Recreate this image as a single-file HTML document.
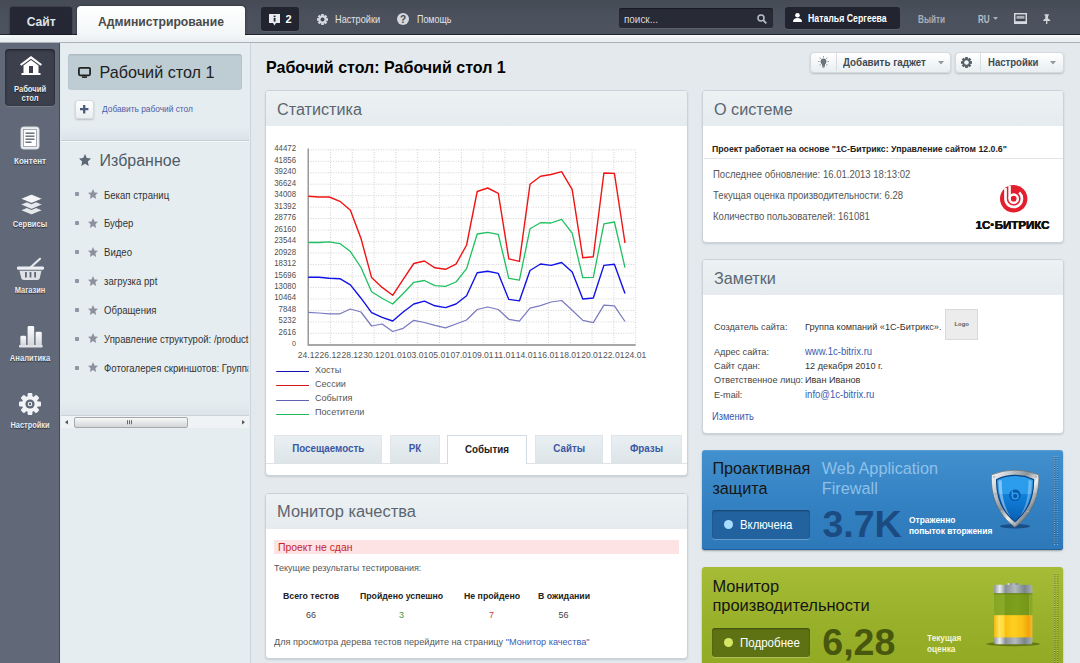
<!DOCTYPE html>
<html lang="ru"><head><meta charset="utf-8"><title>Рабочий стол</title>
<style>
*{box-sizing:border-box;margin:0;padding:0}
html,body{width:1080px;height:663px;overflow:hidden}
body{position:relative;font-family:"Liberation Sans",sans-serif;font-size:12px;color:#333;background:#e2e9ed}
.abs,.t{position:absolute}
.t{white-space:nowrap;transform-origin:0 50%}
svg{position:absolute;overflow:visible}
#top{left:0;top:0;width:1080px;height:34px;background:linear-gradient(#454b55,#4b515c 40%,#4d535e)}
#strip{left:0;top:34px;width:1080px;height:9px;background:linear-gradient(#fdfefe,#eef2f4 40%,#e8edf0);border-top:1px solid #1f2330;border-bottom:1px solid #aab2b8}
#tab1{left:10px;top:7px;width:62px;height:27px;background:#252834;border-radius:3px 3px 0 0;box-shadow:0 0 2px rgba(0,0,0,.6)}
#tab2{left:77px;top:6px;width:168px;height:29px;background:linear-gradient(#ffffff,#f3f6f7);border-radius:4px 4px 0 0;box-shadow:0 0 3px rgba(0,0,0,.5)}#tab2b{left:77px;top:34px;width:168px;height:8px;background:linear-gradient(#f4f6f8,#e9eef1)}
.dk{background:#22252f;border-radius:3px;box-shadow:0 1px 0 rgba(255,255,255,.08)}
#lbar{left:0;top:43px;width:60px;height:620px;background:#616979;border-right:1px solid #434b5c}
#lact{left:5px;top:49px;width:50px;height:57px;background:#3b404c;border-radius:4px;box-shadow:inset 0 1px 3px rgba(0,0,0,.55),0 1px 0 rgba(255,255,255,.12)}
.ll{text-shadow:0 1px 1px rgba(0,0,0,.55)}
#sub{left:61px;top:43px;width:190px;height:620px;background:#e6edf0;border-right:1px solid #cbd5dd}
#main{left:251px;top:43px;width:829px;height:620px;background:#e3e9ed}
.panel{background:#fff;border:1px solid #cbd3d9;border-radius:4px;box-shadow:0 1px 2px rgba(0,0,0,.13);overflow:hidden}
.ph{left:0;top:0;width:100%;height:35px;background:linear-gradient(#edf1f4,#e5ebee);position:absolute}
.btn{background:linear-gradient(#ffffff,#e9eef1);border:1px solid #d3d9de;border-radius:4px;box-shadow:0 1px 2px rgba(0,0,0,.2)}
.tab{background:linear-gradient(#e9eff2,#dde5e9);border:1px solid #dfe5e9;border-bottom:none}
</style></head><body>
<div id="main" class="abs"></div>
<div id="top" class="abs"></div><div id="strip" class="abs"></div><div id="tab1" class="abs"></div><div id="tab2" class="abs"></div><div id="tab2b" class="abs"></div>
<div class="t " style="left:26.7px;top:14.5px;font-size:12.15px;line-height:15px;color:#dfe3ea;font-weight:bold;">Сайт</div>
<div class="t " style="left:98px;top:14.7px;font-size:12.17px;line-height:15px;color:#4a4a4a;font-weight:bold;">Администрирование</div>
<div class="abs dk" style="left:260.500px;top:7px;width:38.500px;height:24px"></div>
<svg style="left:269px;top:13.5px" width="11" height="12" viewBox="0 0 11 12"><path d="M0 0h11v9h-4l-1.5 2.5L4 9H0z" fill="#e8ebf0"/><rect x="4.7" y="1.6" width="1.8" height="1.6" fill="#22252f"/><rect x="4.7" y="4" width="1.8" height="3.6" fill="#22252f"/></svg>
<div class="t " style="left:285.5px;top:12.0px;font-size:11px;line-height:14px;color:#fff;font-weight:bold;">2</div>
<svg style="left:317px;top:13.5px" width="11" height="11" viewBox="-5.5 -5.5 11 11"><g fill="#d4d8df"><rect x="-1.3" y="-5.5" width="2.6" height="11" transform="rotate(0)"/><rect x="-1.3" y="-5.5" width="2.6" height="11" transform="rotate(45)"/><rect x="-1.3" y="-5.5" width="2.6" height="11" transform="rotate(90)"/><rect x="-1.3" y="-5.5" width="2.6" height="11" transform="rotate(135)"/><circle r="4.1"/></g><circle r="2" fill="#444852"/></svg>
<div class="t " style="left:335px;top:12.0px;font-size:11px;line-height:14px;color:#e0e3e9;font-weight:normal;transform:scaleX(0.835);">Настройки</div>
<svg style="left:397px;top:13px" width="12" height="12" viewBox="0 0 12 12"><circle cx="6" cy="6" r="6" fill="#d4d8df"/></svg>
<div class="t " style="left:400.3px;top:12.3px;font-size:10.8px;line-height:14px;color:#444852;font-weight:bold;transform:scaleX(0.926);">?</div>
<div class="t " style="left:416.5px;top:12.0px;font-size:11px;line-height:14px;color:#e0e3e9;font-weight:normal;transform:scaleX(0.81);">Помощь</div>
<div class="abs" style="left:619px;top:8px;width:154px;height:20px;background:#282b36;border-radius:2px;box-shadow:inset 0 1px 1px rgba(0,0,0,.4),0 1px 0 rgba(255,255,255,.08)"></div>
<div class="t " style="left:623.7px;top:12.0px;font-size:11px;line-height:14px;color:#d4d8df;font-weight:normal;transform:scaleX(0.9);">поиск...</div>
<svg style="left:757px;top:13.5px" width="10" height="10" viewBox="0 0 10 10"><circle cx="4" cy="4" r="3" fill="none" stroke="#b8bdc6" stroke-width="1.5"/><path d="M6.2 6.2L9.3 9.3" stroke="#b8bdc6" stroke-width="1.8"/></svg>
<div class="abs dk" style="left:785px;top:7px;width:115px;height:22px"></div>
<svg style="left:793px;top:13px" width="9" height="9" viewBox="0 0 9 9"><circle cx="4.5" cy="2.3" r="2.3" fill="#fff"/><path d="M0 9c0-3 2-4 4.5-4S9 6 9 9z" fill="#fff"/></svg>
<div class="t " style="left:808px;top:12.0px;font-size:10.5px;line-height:13px;color:#fff;font-weight:bold;transform:scaleX(0.832);">Наталья Сергеева</div>
<div class="t " style="left:917.5px;top:12.5px;font-size:10.5px;line-height:13px;color:#a9aeb9;font-weight:bold;transform:scaleX(0.78);">Выйти</div>
<div class="t " style="left:977.5px;top:12.5px;font-size:10.5px;line-height:13px;color:#b7bcc6;font-weight:bold;transform:scaleX(0.77);">RU</div>
<svg style="left:993px;top:17px" width="5" height="3" viewBox="0 0 5 3"><path d="M0 0h5L2.5 3z" fill="#a9aeb9"/></svg>
<svg style="left:1014px;top:13px" width="13" height="11" viewBox="0 0 13 11"><rect x=".75" y=".75" width="11.5" height="9.5" fill="#3c414b" stroke="#d6dae0" stroke-width="1.500"/><rect x=".75" y="8.200" width="11.500" height="2" fill="#d6dae0"/><rect x="2.500" y="2.800" width="8" height="3" fill="#a9aeb8"/></svg>
<svg style="left:1043.200px;top:13.200px" width="7.400" height="12.200" viewBox="0 0 9 12"><path d="M1.800 0h5.400v1.600h-1v3.600l2.500 2v1.200H5.300v3.600h-1.600V8.400H.3V7.200l2.500-2V1.600h-1z" fill="#d0d4db"/></svg>
<div id="lbar" class="abs"></div><div id="lact" class="abs"></div>
<div class="t ll" style="left:0;width:60px;text-align:center;top:83.7px;font-size:9px;line-height:11px;color:#eceef1;font-weight:bold;transform-origin:50% 50%;transform:scaleX(0.845)">Рабочий</div>
<div class="t ll" style="left:0;width:60px;text-align:center;top:93.3px;font-size:9px;line-height:11px;color:#eceef1;font-weight:bold;transform-origin:50% 50%;transform:scaleX(0.845)">стол</div>
<div class="t ll" style="left:0;width:60px;text-align:center;top:155.8px;font-size:9px;line-height:11px;color:#eceef1;font-weight:bold;transform-origin:50% 50%;transform:scaleX(0.9)">Контент</div>
<div class="t ll" style="left:0;width:60px;text-align:center;top:219.2px;font-size:9px;line-height:11px;color:#eceef1;font-weight:bold;transform-origin:50% 50%;transform:scaleX(0.84)">Сервисы</div>
<div class="t ll" style="left:0;width:60px;text-align:center;top:284.9px;font-size:9px;line-height:11px;color:#eceef1;font-weight:bold;transform-origin:50% 50%;transform:scaleX(0.825)">Магазин</div>
<div class="t ll" style="left:0;width:60px;text-align:center;top:352.9px;font-size:9px;line-height:11px;color:#eceef1;font-weight:bold;transform-origin:50% 50%;transform:scaleX(0.845)">Аналитика</div>
<div class="t ll" style="left:0;width:60px;text-align:center;top:419.5px;font-size:9px;line-height:11px;color:#eceef1;font-weight:bold;transform-origin:50% 50%;transform:scaleX(0.825)">Настройки</div>
<svg style="left:19.5px;top:56px" width="22" height="19" viewBox="0 0 22 19"><path d="M11 0L0 8.2l1.3 1.6L11 2.8l9.7 7 1.3-1.6z" fill="#fff"/><path d="M3.5 9.5L11 4l7.5 5.5V17H3.5z" fill="#fff"/><rect x="9" y="10" width="4" height="7" fill="#3b404c"/><rect x="1.5" y="17" width="19" height="2" fill="#fff"/></svg>
<svg style="left:20px;top:126px" width="20" height="24" viewBox="0 0 20 24"><rect x="1" y="1" width="18" height="22" rx="2.5" fill="#eceef1" stroke="#d9dce1" stroke-width="1"/><rect x="3.5" y="3.5" width="13" height="17" fill="#fff" stroke="#8e95a1" stroke-width=".8"/><g fill="#5f6877"><rect x="5.5" y="6.5" width="9" height="1.4"/><rect x="5.5" y="9.5" width="9" height="1.4"/><rect x="5.5" y="12.5" width="9" height="1.4"/><rect x="5.5" y="15.5" width="6" height="1.4"/></g></svg>
<svg style="left:20px;top:194px" width="23" height="22" viewBox="0 0 23 22"><g fill="#e6e8eb" stroke="#5f6877" stroke-width="1.100"><path d="M11.500 11.500L0 16.300l11.500 4.800L23 16.300z"/><path d="M11.500 5.800L0 10.600l11.500 4.800L23 10.600z"/><path d="M11.500 0L0 4.800l11.500 4.800L23 4.800z" fill="#f4f5f7"/></g></svg>
<svg style="left:17px;top:258px" width="27" height="22" viewBox="0 0 27 22"><path d="M14 9L23 .8" stroke="#e6e8eb" stroke-width="2.2" stroke-linecap="round" fill="none"/><rect x="0" y="8.5" width="27" height="3.2" rx="1.3" fill="#eceef1"/><path d="M2.5 12.700h22l-1.800 7.500q-.5 1.800-2.300 1.800H6.600q-1.800 0-2.300-1.800z" fill="#dfe1e5"/><g fill="#5f6877"><rect x="8" y="14" width="1.8" height="5.5"/><rect x="12.6" y="14" width="1.8" height="5.5"/><rect x="17.2" y="14" width="1.8" height="5.5"/></g></svg>
<svg style="left:18.600px;top:326px" width="23.600" height="21.500" viewBox="0 0 23.600 21.500"><defs><linearGradient id="ag" x1="0" y1="0" x2="0" y2="1"><stop offset="0" stop-color="#fafbfc"/><stop offset="1" stop-color="#d3d6db"/></linearGradient></defs><g fill="url(#ag)"><path d="M1.400 19.500V11.200q0-1.400 1.400-1.400h2.900q1.400 0 1.400 1.400V19.500z"/><path d="M8.600 19.500V1.400Q8.600 0 10 0h3.800q1.400 0 1.400 1.400V19.500z"/><path d="M16.600 19.500V7.100q0-1.400 1.400-1.400h3.400q1.400 0 1.400 1.400V19.500z"/><rect x="0" y="19" width="23.600" height="2.400" rx=".6" fill="#dfe1e5"/></g></svg>
<svg style="left:19px;top:393px" width="22" height="22" viewBox="-11 -11 22 22"><g fill="#f2f3f5"><rect x="-2.4" y="-11" width="4.8" height="22" rx="1" transform="rotate(0)"/><rect x="-2.4" y="-11" width="4.8" height="22" rx="1" transform="rotate(45)"/><rect x="-2.4" y="-11" width="4.8" height="22" rx="1" transform="rotate(90)"/><rect x="-2.4" y="-11" width="4.8" height="22" rx="1" transform="rotate(135)"/><circle r="8"/></g><circle r="4.6" fill="#5f6877"/><circle r="2.3" fill="#f2f3f5"/><circle r="1.2" fill="#5f6877"/></svg>
<div id="sub" class="abs"></div>
<div class="abs" style="left:68px;top:53.700px;width:174px;height:36.800px;background:#bdcdd3;border-radius:3px;box-shadow:inset 0 1px 2px rgba(0,0,0,.12)"></div>
<svg style="left:78px;top:67px" width="13" height="11" viewBox="0 0 13 11"><rect x=".9" y=".9" width="11.2" height="7.4" rx="1.2" fill="none" stroke="#222" stroke-width="1.8"/><rect x="4" y="9.3" width="5" height="1.6" fill="#222"/></svg>
<div class="t " style="left:99.6px;top:61.8px;font-size:16.17px;line-height:20px;color:#222;font-weight:normal;">Рабочий стол 1</div>
<div class="abs btn" style="left:75px;top:99.5px;width:19px;height:19.5px;border-radius:3px"></div>
<svg style="left:80.300px;top:105px" width="8.400" height="8.400" viewBox="0 0 8 8"><path d="M2.900 0h2.200v2.900h2.900v2.200H5.100v2.900H2.900V5.100H0V2.900h2.900z" fill="#4d5c7c"/></svg>
<div class="t " style="left:101.7px;top:104.1px;font-size:8.7px;line-height:11px;color:#4a60a6;font-weight:normal;transform:scaleX(0.96);">Добавить рабочий стол</div>
<div class="abs" style="left:61px;top:126px;width:188px;height:14px;background:linear-gradient(rgba(200,212,219,0),rgba(200,212,219,.38))"></div>
<div class="abs" style="left:61px;top:139.5px;width:188px;height:1px;background:#c6cfd5"></div><div class="abs" style="left:61px;top:140.5px;width:188px;height:1px;background:#f5f8f9"></div>
<svg style="left:79px;top:153.8px" width="12" height="12" viewBox="0 0 10 10"><path d="M5 0l1.5 3.4 3.5.4-2.6 2.5.7 3.7L5 8.1 1.9 10l.7-3.7L0 3.8l3.5-.4z" fill="#5d6977"/></svg>
<div class="t " style="left:99.6px;top:150.9px;font-size:15.98px;line-height:20px;color:#4f5b67;font-weight:normal;">Избранное</div>
<div class="abs" style="left:74.5px;top:192.2px;width:4px;height:4px;background:#9097a4;border-radius:.8px"></div>
<svg style="left:87.5px;top:188.8px" width="10" height="10" viewBox="0 0 10 10"><path d="M5 0l1.5 3.4 3.5.4-2.6 2.5.7 3.7L5 8.1 1.9 10l.7-3.7L0 3.8l3.5-.4z" fill="#8c919d"/></svg>
<div class="t " style="left:104px;top:188.5px;font-size:10.35px;line-height:13px;color:#333;font-weight:normal;transform:scaleX(0.926);">Бекап страниц</div>
<div class="abs" style="left:74.5px;top:221.1px;width:4px;height:4px;background:#9097a4;border-radius:.8px"></div>
<svg style="left:87.5px;top:217.7px" width="10" height="10" viewBox="0 0 10 10"><path d="M5 0l1.5 3.4 3.5.4-2.6 2.5.7 3.7L5 8.1 1.9 10l.7-3.7L0 3.8l3.5-.4z" fill="#8c919d"/></svg>
<div class="t " style="left:104px;top:217.4px;font-size:10.35px;line-height:13px;color:#333;font-weight:normal;transform:scaleX(0.926);">Буфер</div>
<div class="abs" style="left:74.5px;top:250.0px;width:4px;height:4px;background:#9097a4;border-radius:.8px"></div>
<svg style="left:87.5px;top:246.6px" width="10" height="10" viewBox="0 0 10 10"><path d="M5 0l1.5 3.4 3.5.4-2.6 2.5.7 3.7L5 8.1 1.9 10l.7-3.7L0 3.8l3.5-.4z" fill="#8c919d"/></svg>
<div class="t " style="left:104px;top:246.3px;font-size:10.35px;line-height:13px;color:#333;font-weight:normal;transform:scaleX(0.926);">Видео</div>
<div class="abs" style="left:74.5px;top:279.0px;width:4px;height:4px;background:#9097a4;border-radius:.8px"></div>
<svg style="left:87.5px;top:275.6px" width="10" height="10" viewBox="0 0 10 10"><path d="M5 0l1.5 3.4 3.5.4-2.6 2.5.7 3.7L5 8.1 1.9 10l.7-3.7L0 3.8l3.5-.4z" fill="#8c919d"/></svg>
<div class="t " style="left:104px;top:275.3px;font-size:10.35px;line-height:13px;color:#333;font-weight:normal;transform:scaleX(0.926);">загрузка ppt</div>
<div class="abs" style="left:74.5px;top:307.9px;width:4px;height:4px;background:#9097a4;border-radius:.8px"></div>
<svg style="left:87.5px;top:304.5px" width="10" height="10" viewBox="0 0 10 10"><path d="M5 0l1.5 3.4 3.5.4-2.6 2.5.7 3.7L5 8.1 1.9 10l.7-3.7L0 3.8l3.5-.4z" fill="#8c919d"/></svg>
<div class="t " style="left:104px;top:304.2px;font-size:10.35px;line-height:13px;color:#333;font-weight:normal;transform:scaleX(0.926);">Обращения</div>
<div class="abs" style="left:74.5px;top:336.8px;width:4px;height:4px;background:#9097a4;border-radius:.8px"></div>
<svg style="left:87.5px;top:333.4px" width="10" height="10" viewBox="0 0 10 10"><path d="M5 0l1.5 3.4 3.5.4-2.6 2.5.7 3.7L5 8.1 1.9 10l.7-3.7L0 3.8l3.5-.4z" fill="#8c919d"/></svg>
<div class="t" style="left:104px;top:333.1px;width:156px;overflow:hidden;font-size:10.35px;line-height:13px;color:#333;transform:scaleX(.926)">Управление структурой: /products</div>
<div class="abs" style="left:74.5px;top:365.7px;width:4px;height:4px;background:#9097a4;border-radius:.8px"></div>
<svg style="left:87.5px;top:362.3px" width="10" height="10" viewBox="0 0 10 10"><path d="M5 0l1.5 3.4 3.5.4-2.6 2.5.7 3.7L5 8.1 1.9 10l.7-3.7L0 3.8l3.5-.4z" fill="#8c919d"/></svg>
<div class="t" style="left:104px;top:362.0px;width:156px;overflow:hidden;font-size:10.35px;line-height:13px;color:#333;transform:scaleX(.926)">Фотогалерея скриншотов: Группа</div>
<div class="abs" style="left:61px;top:402px;width:188px;height:13px;background:linear-gradient(rgba(200,212,219,0),rgba(200,212,219,.38))"></div>
<div class="abs" style="left:61px;top:415px;width:188px;height:1px;background:#cbd3d9"></div>
<div class="abs" style="left:61px;top:416px;width:188px;height:12px;background:#eff3f5"></div>
<div class="abs" style="left:73.500px;top:416.800px;width:114.300px;height:11.100px;background:linear-gradient(#f8f8f8,#d3d5d7);border:1px solid #a4a9ae;border-radius:2px"></div>
<svg style="left:127px;top:420px" width="6" height="4.5" viewBox="0 0 6 4"><path d="M.5 0v4M2.5 0v4M4.5 0v4" stroke="#666" stroke-width="1"/></svg>
<svg style="left:64.500px;top:420px" width="3" height="4.600" viewBox="0 0 3 5"><path d="M3 0v5L0 2.500z" fill="#4a4a4a"/></svg>
<svg style="left:241.800px;top:420px" width="3" height="4.600" viewBox="0 0 3 5"><path d="M0 0v5l3-2.500z" fill="#4a4a4a"/></svg>
<div class="t " style="left:266px;top:57.0px;font-size:16.05px;line-height:20px;color:#000;font-weight:bold;">Рабочий стол: Рабочий стол 1</div>
<div class="abs btn" style="left:810px;top:51.5px;width:141px;height:21.5px"></div>
<div class="abs" style="left:835.5px;top:53px;width:1px;height:18px;background:#d6dce0"></div>
<svg style="left:818px;top:56px" width="11" height="12" viewBox="-5.5 -5.5 11 12"><g stroke="#9aa2aa" stroke-width="1"><path d="M0 -5.5V-3.9" transform="rotate(0)"/><path d="M0 -5.5V-3.9" transform="rotate(45)"/><path d="M0 -5.5V-3.9" transform="rotate(90)"/><path d="M0 -5.5V-3.9" transform="rotate(-45)"/><path d="M0 -5.5V-3.9" transform="rotate(-90)"/><path d="M0 -5.5V-3.9" transform="rotate(135)"/><path d="M0 -5.5V-3.9" transform="rotate(-135)"/></g><circle r="2.9" fill="#6c757d"/><rect x="-1.5" y="2.5" width="3" height="2.6" fill="#6c757d"/><rect x="-.9" y="5.3" width="1.8" height=".9" fill="#6c757d"/></svg>
<div class="t " style="left:843.3px;top:55.7px;font-size:10.59px;line-height:13px;color:#3f4a53;font-weight:bold;transform:scaleX(0.926);">Добавить гаджет</div>
<svg style="left:937.5px;top:60.5px" width="6" height="3.5" viewBox="0 0 6 3.5"><path d="M0 0h6L3 3.5z" fill="#8f989f"/></svg>
<div class="abs btn" style="left:955px;top:51.5px;width:109px;height:21.5px"></div>
<div class="abs" style="left:979.5px;top:53px;width:1px;height:18px;background:#d6dce0"></div>
<svg style="left:961.2px;top:56.5px" width="11" height="11" viewBox="-5.5 -5.5 11 11"><g fill="#555e66"><rect x="-1.3" y="-5.5" width="2.6" height="11" transform="rotate(0)"/><rect x="-1.3" y="-5.5" width="2.6" height="11" transform="rotate(45)"/><rect x="-1.3" y="-5.5" width="2.6" height="11" transform="rotate(90)"/><rect x="-1.3" y="-5.5" width="2.6" height="11" transform="rotate(135)"/><circle r="4.2"/></g><circle r="2.3" fill="#f3f6f7"/></svg>
<div class="t " style="left:988px;top:55.7px;font-size:10.34px;line-height:13px;color:#3f4a53;font-weight:bold;transform:scaleX(0.926);">Настройки</div>
<svg style="left:1049.7px;top:60.5px" width="6" height="3.5" viewBox="0 0 6 3.5"><path d="M0 0h6L3 3.5z" fill="#8f989f"/></svg>
<div class="abs panel" style="left:265px;top:90px;width:423px;height:386px"><div class="ph"></div></div>
<div class="t " style="left:277px;top:98.6px;font-size:16.18px;line-height:20px;color:#5b6670;font-weight:normal;">Статистика</div>
<div class="abs panel" style="left:265px;top:493px;width:423px;height:166px"><div class="ph"></div></div>
<div class="t " style="left:277px;top:501.1px;font-size:16.44px;line-height:21px;color:#5b6670;font-weight:normal;">Монитор качества</div>
<div class="abs panel" style="left:702px;top:90px;width:362px;height:153px"><div class="ph"></div></div>
<div class="t " style="left:714px;top:98.6px;font-size:16.2px;line-height:20px;color:#5b6670;font-weight:normal;">О системе</div>
<div class="abs panel" style="left:702px;top:259px;width:362px;height:175px"><div class="ph"></div></div>
<div class="t " style="left:714px;top:267.6px;font-size:16.2px;line-height:20px;color:#5b6670;font-weight:normal;">Заметки</div>
<svg style="left:0;top:0" width="1080" height="663" viewBox="0 0 1080 663"><path d="M330.5 149.5V344.8M352.3 149.5V344.8M374.1 149.5V344.8M395.9 149.5V344.8M417.7 149.5V344.8M439.5 149.5V344.8M461.3 149.5V344.8M483.1 149.5V344.8M504.9 149.5V344.8M526.7 149.5V344.8M548.5 149.5V344.8M570.3 149.5V344.8M592.1 149.5V344.8M613.9 149.5V344.8M635.7 149.5V344.8M308.2 333.3H635.2M308.2 321.9H635.2M308.2 310.4H635.2M308.2 298.9H635.2M308.2 287.4H635.2M308.2 276.0H635.2M308.2 264.5H635.2M308.2 253.0H635.2M308.2 241.6H635.2M308.2 230.1H635.2M308.2 218.6H635.2M308.2 207.2H635.2M308.2 195.7H635.2M308.2 184.2H635.2M308.2 172.8H635.2M308.2 161.3H635.2M308.2 149.8H635.2" stroke="#d2d2d2" stroke-width="1" stroke-dasharray="1 1.5" fill="none"/><path d="M308.2 148.5V345.0H635.7" stroke="#8a8a8a" stroke-width="1.3" fill="none"/><polyline points="308.2,312.3 318.8,313 329.3,313.8 339.9,313.8 350.4,309 361.0,312 371.6,326 382.1,324 392.7,331.5 403.2,328.3 413.8,320.3 424.4,322.5 434.9,325.4 445.5,327.9 456.0,324 466.6,320 477.2,309.5 487.7,307 498.3,309.5 508.8,319.3 519.4,321.1 530.0,308.1 540.5,305.6 551.1,302 561.6,300.5 572.2,310.3 582.8,320.4 593.3,322.6 603.9,305.2 614.4,305.9 625.0,321.5" fill="none" stroke="#7a7ac0" stroke-width="1.25" stroke-linejoin="round"/><polyline points="308.2,277.3 318.8,277.3 329.3,278.3 339.9,278.7 350.4,284.9 361.0,298.2 371.6,312.7 382.1,317.4 392.7,321 403.2,312 413.8,304 424.4,301.1 434.9,305.8 445.5,307.6 456.0,304 466.6,295.7 477.2,272.7 487.7,271.2 498.3,273.4 508.8,299.4 519.4,300.9 530.0,270.5 540.5,264 551.1,265.4 561.6,262.5 572.2,271.9 582.8,299 593.3,298 603.9,265.4 614.4,264.3 625.0,293.6" fill="none" stroke="#1212e6" stroke-width="1.4" stroke-linejoin="round"/><polyline points="308.2,242.5 318.8,242.5 329.3,241.8 339.9,243.6 350.4,251.6 361.0,267.5 371.6,291.7 382.1,298.2 392.7,304 403.2,293.5 413.8,282.3 424.4,280.5 434.9,285.6 445.5,286.3 456.0,282 466.6,268.6 477.2,234 487.7,232.4 498.3,234.3 508.8,278.4 519.4,280.2 530.0,228.8 540.5,222.7 551.1,223 561.6,219.4 572.2,233.2 582.8,277.7 593.3,277.3 603.9,223.8 614.4,222 625.0,267.6" fill="none" stroke="#1fc060" stroke-width="1.3" stroke-linejoin="round"/><polyline points="308.2,196.2 318.8,197 329.3,197 339.9,201.3 350.4,210.3 361.0,238.5 371.6,277.6 382.1,287.4 392.7,295.3 403.2,279.4 413.8,263.5 424.4,261 434.9,267.8 445.5,269.3 456.0,264.2 466.6,245 477.2,191.5 487.7,188 498.3,193.3 508.8,258.9 519.4,261.4 530.0,184.3 540.5,176.3 551.1,174.5 561.6,171.6 572.2,189.7 582.8,257.8 593.3,256.7 603.9,173 614.4,173.4 625.0,243" fill="none" stroke="#f01414" stroke-width="1.4" stroke-linejoin="round"/><text x="296" y="345.9" font-size="7.2" fill="#505050" text-anchor="end" font-family="Liberation Sans, sans-serif">0</text><text x="278.6" y="334.8" font-size="9" fill="#505050" textLength="17.4" lengthAdjust="spacingAndGlyphs" font-family="Liberation Sans, sans-serif">2616</text><text x="278.6" y="323.4" font-size="9" fill="#505050" textLength="17.4" lengthAdjust="spacingAndGlyphs" font-family="Liberation Sans, sans-serif">5232</text><text x="278.6" y="311.9" font-size="9" fill="#505050" textLength="17.4" lengthAdjust="spacingAndGlyphs" font-family="Liberation Sans, sans-serif">7848</text><text x="274.2" y="300.4" font-size="9" fill="#505050" textLength="21.8" lengthAdjust="spacingAndGlyphs" font-family="Liberation Sans, sans-serif">10464</text><text x="274.2" y="288.9" font-size="9" fill="#505050" textLength="21.8" lengthAdjust="spacingAndGlyphs" font-family="Liberation Sans, sans-serif">13080</text><text x="274.2" y="277.5" font-size="9" fill="#505050" textLength="21.8" lengthAdjust="spacingAndGlyphs" font-family="Liberation Sans, sans-serif">15696</text><text x="274.2" y="266.0" font-size="9" fill="#505050" textLength="21.8" lengthAdjust="spacingAndGlyphs" font-family="Liberation Sans, sans-serif">18312</text><text x="274.2" y="254.5" font-size="9" fill="#505050" textLength="21.8" lengthAdjust="spacingAndGlyphs" font-family="Liberation Sans, sans-serif">20928</text><text x="274.2" y="243.1" font-size="9" fill="#505050" textLength="21.8" lengthAdjust="spacingAndGlyphs" font-family="Liberation Sans, sans-serif">23544</text><text x="274.2" y="231.6" font-size="9" fill="#505050" textLength="21.8" lengthAdjust="spacingAndGlyphs" font-family="Liberation Sans, sans-serif">26160</text><text x="274.2" y="220.1" font-size="9" fill="#505050" textLength="21.8" lengthAdjust="spacingAndGlyphs" font-family="Liberation Sans, sans-serif">28776</text><text x="274.2" y="208.7" font-size="9" fill="#505050" textLength="21.8" lengthAdjust="spacingAndGlyphs" font-family="Liberation Sans, sans-serif">31392</text><text x="274.2" y="197.2" font-size="9" fill="#505050" textLength="21.8" lengthAdjust="spacingAndGlyphs" font-family="Liberation Sans, sans-serif">34008</text><text x="274.2" y="185.7" font-size="9" fill="#505050" textLength="21.8" lengthAdjust="spacingAndGlyphs" font-family="Liberation Sans, sans-serif">36624</text><text x="274.2" y="174.2" font-size="9" fill="#505050" textLength="21.8" lengthAdjust="spacingAndGlyphs" font-family="Liberation Sans, sans-serif">39240</text><text x="274.2" y="162.8" font-size="9" fill="#505050" textLength="21.8" lengthAdjust="spacingAndGlyphs" font-family="Liberation Sans, sans-serif">41856</text><text x="274.2" y="151.3" font-size="9" fill="#505050" textLength="21.8" lengthAdjust="spacingAndGlyphs" font-family="Liberation Sans, sans-serif">44472</text><text x="297.8" y="357.7" font-size="9" fill="#555" textLength="21.4" lengthAdjust="spacingAndGlyphs" font-family="Liberation Sans, sans-serif">24.12</text><text x="319.6" y="357.7" font-size="9" fill="#555" textLength="21.4" lengthAdjust="spacingAndGlyphs" font-family="Liberation Sans, sans-serif">26.12</text><text x="341.4" y="357.7" font-size="9" fill="#555" textLength="21.4" lengthAdjust="spacingAndGlyphs" font-family="Liberation Sans, sans-serif">28.12</text><text x="363.2" y="357.7" font-size="9" fill="#555" textLength="21.4" lengthAdjust="spacingAndGlyphs" font-family="Liberation Sans, sans-serif">30.12</text><text x="385.0" y="357.7" font-size="9" fill="#555" textLength="21.4" lengthAdjust="spacingAndGlyphs" font-family="Liberation Sans, sans-serif">01.01</text><text x="406.8" y="357.7" font-size="9" fill="#555" textLength="21.4" lengthAdjust="spacingAndGlyphs" font-family="Liberation Sans, sans-serif">03.01</text><text x="428.6" y="357.7" font-size="9" fill="#555" textLength="21.4" lengthAdjust="spacingAndGlyphs" font-family="Liberation Sans, sans-serif">05.01</text><text x="450.4" y="357.7" font-size="9" fill="#555" textLength="21.4" lengthAdjust="spacingAndGlyphs" font-family="Liberation Sans, sans-serif">07.01</text><text x="472.2" y="357.7" font-size="9" fill="#555" textLength="21.4" lengthAdjust="spacingAndGlyphs" font-family="Liberation Sans, sans-serif">09.01</text><text x="494.0" y="357.7" font-size="9" fill="#555" textLength="21.4" lengthAdjust="spacingAndGlyphs" font-family="Liberation Sans, sans-serif">11.01</text><text x="515.8" y="357.7" font-size="9" fill="#555" textLength="21.4" lengthAdjust="spacingAndGlyphs" font-family="Liberation Sans, sans-serif">14.01</text><text x="537.6" y="357.7" font-size="9" fill="#555" textLength="21.4" lengthAdjust="spacingAndGlyphs" font-family="Liberation Sans, sans-serif">16.01</text><text x="559.4" y="357.7" font-size="9" fill="#555" textLength="21.4" lengthAdjust="spacingAndGlyphs" font-family="Liberation Sans, sans-serif">18.01</text><text x="581.2" y="357.7" font-size="9" fill="#555" textLength="21.4" lengthAdjust="spacingAndGlyphs" font-family="Liberation Sans, sans-serif">20.01</text><text x="603.0" y="357.7" font-size="9" fill="#555" textLength="21.4" lengthAdjust="spacingAndGlyphs" font-family="Liberation Sans, sans-serif">22.01</text><text x="624.8" y="357.7" font-size="9" fill="#555" textLength="21.4" lengthAdjust="spacingAndGlyphs" font-family="Liberation Sans, sans-serif">24.01</text><path d="M276.2 371.5H309" stroke="#1414b4" stroke-width="1.1"/><path d="M276.2 385.5H309" stroke="#d81414" stroke-width="1.1"/><path d="M276.2 400.5H309" stroke="#6060b0" stroke-width="1.1"/><path d="M276.2 414.5H309" stroke="#1cb858" stroke-width="1.1"/></svg>
<div class="t " style="left:314.6px;top:364.0px;font-size:9.82px;line-height:12px;color:#555;font-weight:normal;transform:scaleX(0.926);">Хосты</div>
<div class="t " style="left:314.6px;top:378.0px;font-size:9.82px;line-height:12px;color:#555;font-weight:normal;transform:scaleX(0.926);">Сессии</div>
<div class="t " style="left:314.6px;top:392.0px;font-size:9.82px;line-height:12px;color:#555;font-weight:normal;transform:scaleX(0.926);">События</div>
<div class="t " style="left:314.6px;top:406.0px;font-size:9.82px;line-height:12px;color:#555;font-weight:normal;transform:scaleX(0.926);">Посетители</div>
<div class="abs" style="left:266px;top:463px;width:421px;height:1px;background:#dde3e7"></div>
<div class="abs tab" style="left:273.5px;top:434.5px;width:108.5px;height:28.5px"></div>
<div class="t" style="left:273.5px;width:108.5px;text-align:center;top:441.5px;font-size:10.4px;line-height:13px;font-weight:bold;color:#3b57a3;transform-origin:50% 50%;transform:scaleX(.94)">Посещаемость</div>
<div class="abs tab" style="left:389.5px;top:434.5px;width:50px;height:28.5px"></div>
<div class="t" style="left:389.5px;width:50px;text-align:center;top:441.5px;font-size:10.4px;line-height:13px;font-weight:bold;color:#3b57a3;transform-origin:50% 50%;transform:scaleX(.94)">РК</div>
<div class="abs" style="left:447px;top:434.5px;width:80px;height:29.5px;background:#fff;border:1px solid #d3dbe0;border-bottom:none"></div>
<div class="t" style="left:447px;width:80px;text-align:center;top:442.5px;font-size:10.4px;line-height:13px;font-weight:bold;color:#222;transform-origin:50% 50%;transform:scaleX(.94)">События</div>
<div class="abs tab" style="left:534.5px;top:434.5px;width:68.5px;height:28.5px"></div>
<div class="t" style="left:534.5px;width:68.5px;text-align:center;top:441.5px;font-size:10.4px;line-height:13px;font-weight:bold;color:#3b57a3;transform-origin:50% 50%;transform:scaleX(.94)">Сайты</div>
<div class="abs tab" style="left:610.5px;top:434.5px;width:71px;height:28.5px"></div>
<div class="t" style="left:610.5px;width:71px;text-align:center;top:441.5px;font-size:10.4px;line-height:13px;font-weight:bold;color:#3b57a3;transform-origin:50% 50%;transform:scaleX(.94)">Фразы</div>
<div class="abs" style="left:274.3px;top:540.3px;width:404.5px;height:13.7px;background:#fde3e3"></div>
<div class="t " style="left:278.3px;top:540.3px;font-size:11.26px;line-height:14px;color:#c8232c;font-weight:normal;transform:scaleX(0.926);">Проект не сдан</div>
<div class="t " style="left:274.3px;top:562.3px;font-size:9.71px;line-height:12px;color:#555;font-weight:normal;transform:scaleX(0.926);">Текущие результаты тестирования:</div>
<div class="t " style="left:283.2px;top:589.6px;font-size:9.46px;line-height:12px;color:#222;font-weight:bold;transform:scaleX(0.926);">Всего тестов</div>
<div class="t " style="left:359.8px;top:589.6px;font-size:9.43px;line-height:12px;color:#222;font-weight:bold;transform:scaleX(0.926);">Пройдено успешно</div>
<div class="t " style="left:463.7px;top:589.6px;font-size:9.46px;line-height:12px;color:#222;font-weight:bold;transform:scaleX(0.926);">Не пройдено</div>
<div class="t " style="left:537.9px;top:589.6px;font-size:9.46px;line-height:12px;color:#222;font-weight:bold;transform:scaleX(0.926);">В ожидании</div>
<div class="t" style="left:281px;width:60px;text-align:center;top:608.6px;font-size:9px;line-height:13px;color:#444">66</div>
<div class="t" style="left:371.4px;width:60px;text-align:center;top:608.6px;font-size:9px;line-height:13px;color:#4a9a3a">3</div>
<div class="t" style="left:461.4px;width:60px;text-align:center;top:608.6px;font-size:9px;line-height:13px;color:#d03a3a">7</div>
<div class="t" style="left:533.5px;width:60px;text-align:center;top:608.6px;font-size:9px;line-height:13px;color:#444">56</div>
<div class="t " style="left:274.3px;top:636.4px;font-size:9.9px;line-height:12px;color:#555;font-weight:normal;transform:scaleX(0.926);">Для просмотра дерева тестов перейдите на страницу <span style="color:#3a5bb0">"Монитор качества"</span></div>
<div class="t " style="left:711.7px;top:142.5px;font-size:9.44px;line-height:12px;color:#222;font-weight:bold;transform:scaleX(0.926);">Проект работает на основе "1С-Битрикс: Управление сайтом 12.0.6"</div>
<div class="abs" style="left:704px;top:158px;width:359px;height:1px;background:#dfe5e8"></div>
<div class="t " style="left:712.8px;top:168.1px;font-size:10.3px;line-height:13px;color:#555;font-weight:normal;transform:scaleX(0.926);">Последнее обновление: 16.01.2013 18:13:02</div>
<div class="t " style="left:712.8px;top:189.1px;font-size:10.35px;line-height:13px;color:#555;font-weight:normal;transform:scaleX(0.926);">Текущая оценка производительности: 6.28</div>
<div class="t " style="left:712.8px;top:209.6px;font-size:10.31px;line-height:13px;color:#555;font-weight:normal;transform:scaleX(0.926);">Количество пользователей: 161081</div>
<svg style="left:999.7px;top:184.8px" width="27.4" height="27.4" viewBox="-13.7 -13.7 27.4 27.4"><circle r="13.7" fill="#e31e2d"/><path d="M-8.200 -10.8V0A8.200 8.200 0 1 0 5.500 -6.100" fill="none" stroke="#fff" stroke-width="2.700"/><path d="M-4.100 -12.900V0" stroke="#fff" stroke-width="2.500" fill="none"/><circle r="4.100" fill="none" stroke="#fff" stroke-width="2.500"/></svg>
<div class="t " style="left:975.6px;top:217.8px;font-size:11.5px;line-height:14px;color:#111;font-weight:bold;text-shadow:.3px 0 0 #111,-.3px 0 0 #111;">1С<span style="font-size:17px;line-height:0;position:relative;top:1.5px;margin:0 -.6px">·</span>БИТРИКС</div>
<div class="t " style="left:713.5px;top:320.6px;font-size:9.83px;line-height:12px;color:#444;font-weight:normal;transform:scaleX(0.926);">Создатель сайта:</div>
<div class="t " style="left:804.5px;top:320.6px;font-size:9.88px;line-height:12px;color:#333;font-weight:normal;transform:scaleX(0.926);">Группа компаний «1С-Битрикс».</div>
<div class="t " style="left:713.5px;top:345.8px;font-size:9.83px;line-height:12px;color:#444;font-weight:normal;transform:scaleX(0.926);">Адрес сайта:</div>
<div class="t " style="left:804.5px;top:345.3px;font-size:10.28px;line-height:13px;color:#3a5bb0;font-weight:normal;transform:scaleX(0.926);">www.1c-bitrix.ru</div>
<div class="t " style="left:713.5px;top:360.3px;font-size:9.83px;line-height:12px;color:#444;font-weight:normal;transform:scaleX(0.926);">Сайт сдан:</div>
<div class="t " style="left:804.5px;top:360.3px;font-size:9.88px;line-height:12px;color:#333;font-weight:normal;transform:scaleX(0.926);">12 декабря 2010 г.</div>
<div class="t " style="left:713.5px;top:374.4px;font-size:9.83px;line-height:12px;color:#444;font-weight:normal;transform:scaleX(0.926);">Ответственное лицо:</div>
<div class="t " style="left:804.5px;top:374.4px;font-size:9.88px;line-height:12px;color:#333;font-weight:normal;transform:scaleX(0.926);">Иван Иванов</div>
<div class="t " style="left:713.5px;top:388.8px;font-size:9.83px;line-height:12px;color:#444;font-weight:normal;transform:scaleX(0.926);">E-mail:</div>
<div class="t " style="left:804.5px;top:388.3px;font-size:10.28px;line-height:13px;color:#3a5bb0;font-weight:normal;transform:scaleX(0.926);">info@1c-bitrix.ru</div>
<div class="abs" style="left:945px;top:309px;width:32.5px;height:30.5px;background:#ececec;border:1px solid #dadada"></div>
<div class="t " style="left:954.5px;top:321.0px;font-size:5.9px;line-height:7px;color:#5a5a5a;font-weight:bold;">Logo</div>
<div class="t " style="left:711.7px;top:409.6px;font-size:10.03px;line-height:13px;color:#3a5bb0;font-weight:normal;transform:scaleX(0.926);">Изменить</div>
<div class="abs" style="left:702px;top:450px;width:361px;height:100px;background:linear-gradient(#4290cd,#3381c2 55%,#2d78b9);border-radius:3px;box-shadow:0 1px 2px rgba(0,0,0,.3), inset 0 -1px 0 #1f5f9c, inset 0 1px 0 rgba(255,255,255,.13)"></div>
<div class="t " style="left:712.4px;top:458.2px;font-size:16.23px;line-height:20px;color:#151515;font-weight:normal;">Проактивная</div>
<div class="t " style="left:712.4px;top:477.7px;font-size:16.23px;line-height:20px;color:#151515;font-weight:normal;">защита</div>
<div class="t " style="left:821.8px;top:458.2px;font-size:16.26px;line-height:20px;color:#8ec1ea;font-weight:normal;">Web Application</div>
<div class="t " style="left:821.8px;top:477.7px;font-size:16.26px;line-height:20px;color:#8ec1ea;font-weight:normal;">Firewall</div>
<div class="abs" style="left:712.4px;top:510.4px;width:98px;height:29px;background:#22639f;border-radius:3px;box-shadow:inset 0 1px 2px rgba(0,0,0,.35),0 1px 0 rgba(255,255,255,.25)"></div>
<div class="abs" style="left:723.5px;top:520.4px;width:9px;height:9px;border-radius:50%;background:#a9ddff"></div>
<div class="t " style="left:739.5px;top:516.4px;font-size:13.5px;line-height:17px;color:#fff;font-weight:normal;transform:scaleX(0.84);">Включена</div>
<div class="t " style="left:822.4px;top:503.7px;font-size:37.5px;line-height:40px;color:#1b4b80;font-weight:bold;">3.7K</div>
<div class="t " style="left:908.5px;top:514.0px;font-size:9.6px;line-height:12px;color:#fff;font-weight:bold;transform:scaleX(0.879);">Отраженно</div>
<div class="t " style="left:908.5px;top:524.9px;font-size:9.6px;line-height:12px;color:#fff;font-weight:bold;transform:scaleX(0.879);">попыток вторжения</div>
<svg style="left:991px;top:470.3px" width="48.2" height="60" viewBox="0 0 48.2 60"><defs><linearGradient id="sg" x1="0" y1="0" x2="1" y2=".9"><stop offset="0" stop-color="#ffffff"/><stop offset=".22" stop-color="#c9d0d6"/><stop offset=".45" stop-color="#8b949c"/><stop offset=".62" stop-color="#eef1f3"/><stop offset=".8" stop-color="#7d868e"/><stop offset="1" stop-color="#d9dee2"/></linearGradient><linearGradient id="sb" x1="0" y1="0" x2="0" y2="1"><stop offset="0" stop-color="#2c9cec"/><stop offset=".4" stop-color="#2b9beb"/><stop offset=".41" stop-color="#0f82dc"/><stop offset="1" stop-color="#0a5fb4"/></linearGradient></defs><ellipse cx="24" cy="56.300" rx="15" ry="2.200" fill="rgba(10,40,90,.55)"/><path d="M.4 4.800Q23.900 -4.600 47.800 4.800C48.600 25 42 44 23.900 57.300 6 44-.4 25 .4 4.800z" fill="url(#sg)" stroke="#5c6871" stroke-width=".7"/><path d="M5.600 9.400Q23.900 1.400 42.600 9.400C43 26 37.500 41 23.900 51.600 10.500 41 5.200 26 5.600 9.200z" fill="url(#sb)" stroke="#0a3f7e" stroke-width="1.100"/><path d="M7.500 10.600l3.300-.4c-.3 14 2 27 9 37C11 38.500 7.300 25 7.500 10.600z" fill="#fff" opacity=".42"/><path d="M40.700 10.600l-3.300-.4c.3 14-2 27-9 37 8.800-8.700 12.500-22.200 12.300-36.600z" fill="#fff" opacity=".3"/><circle cx="23.900" cy="25.300" r="5.800" fill="#0b59aa"/><circle cx="24.200" cy="26" r="2.900" fill="none" stroke="#2ea4f2" stroke-width="1.400"/><path d="M21.300 26.300V20.800" stroke="#2ea4f2" stroke-width="1.400"/><g fill="#eef1f3" stroke="#68737c" stroke-width=".4"><circle cx="23.900" cy="2.300" r=".9"/><circle cx="3" cy="6.800" r=".8"/><circle cx="44.900" cy="6.800" r=".8"/><circle cx="4.500" cy="24" r=".8"/><circle cx="43.400" cy="24" r=".8"/><circle cx="10.800" cy="41.500" r=".8"/><circle cx="37" cy="41.500" r=".8"/><circle cx="23.900" cy="54" r=".9"/></g></svg>
<svg style="left:1053.5px;top:456px" width="5" height="89" viewBox="0 0 5 89"><path d="M.7 0V89M3.700 0V89" stroke="rgba(0,0,0,.3)" stroke-width="1.200"/><path d="M.7 0V89M3.700 0V89" stroke="#9cc6ea" stroke-width="1" stroke-dasharray="1 1.200"/></svg>
<div class="abs" style="left:702px;top:567px;width:361px;height:100px;background:linear-gradient(#a6bc36,#99b02a 55%,#92a924);border-radius:3px;box-shadow:0 1px 2px rgba(0,0,0,.3)"></div>
<div class="t " style="left:712.4px;top:575.5px;font-size:16.4px;line-height:20px;color:#151515;font-weight:normal;">Монитор</div>
<div class="t " style="left:712.4px;top:594.5px;font-size:16.45px;line-height:21px;color:#151515;font-weight:normal;">производительности</div>
<div class="abs" style="left:712.4px;top:627.8px;width:98px;height:29.6px;background:#5e7213;border-radius:3px;box-shadow:inset 0 1px 2px rgba(0,0,0,.35),0 1px 0 rgba(255,255,255,.25)"></div>
<div class="abs" style="left:723.5px;top:637.7px;width:9px;height:9px;border-radius:50%;background:#d5e765"></div>
<div class="t " style="left:739.5px;top:633.7px;font-size:13.5px;line-height:17px;color:#fff;font-weight:normal;transform:scaleX(0.855);">Подробнее</div>
<div class="t " style="left:822.3px;top:622.3px;font-size:37.5px;line-height:40px;color:#47570d;font-weight:bold;">6,28</div>
<div class="t " style="left:926.5px;top:631.6px;font-size:9.3px;line-height:12px;color:#f3f6dc;font-weight:bold;transform:scaleX(0.887);">Текущая</div>
<div class="t " style="left:926.5px;top:643.0px;font-size:9.3px;line-height:12px;color:#f3f6dc;font-weight:bold;transform:scaleX(0.887);">оценка</div>
<svg style="left:994.4px;top:583px" width="38.4" height="63" viewBox="0 0 38.4 63"><defs><linearGradient id="bg1" x1="0" y1="0" x2="1" y2="0"><stop offset="0" stop-color="#86a626"/><stop offset=".27" stop-color="#8aaa28"/><stop offset=".28" stop-color="#789a1a"/><stop offset=".6" stop-color="#7ea01e"/><stop offset=".9" stop-color="#759618"/><stop offset=".91" stop-color="#8cac2e"/><stop offset="1" stop-color="#86a628"/></linearGradient><linearGradient id="bg2" x1="0" y1="0" x2="1" y2="0"><stop offset="0" stop-color="#eeb90f"/><stop offset=".14" stop-color="#ffe45a"/><stop offset=".27" stop-color="#ffd62e"/><stop offset=".28" stop-color="#f7bd10"/><stop offset=".5" stop-color="#ffcf22"/><stop offset=".75" stop-color="#f9c012"/><stop offset=".9" stop-color="#f0a40c"/><stop offset="1" stop-color="#f6b93a"/></linearGradient><linearGradient id="bg3" x1="0" y1="0" x2="1" y2="0"><stop offset="0" stop-color="#8d9498"/><stop offset=".15" stop-color="#e9ecee"/><stop offset=".3" stop-color="#8a9195"/><stop offset=".55" stop-color="#b4babe"/><stop offset=".8" stop-color="#79868a"/><stop offset="1" stop-color="#aab1b5"/></linearGradient></defs><ellipse cx="19.200" cy="61" rx="27" ry="2.200" fill="rgba(40,55,0,.45)"/><rect x="12.500" y=".3" width="13" height="3" rx="1.200" fill="url(#bg3)"/><path d="M0 3.800Q0 1.800 2 1.800H36.400Q38.400 1.800 38.400 3.800V10.500H0z" fill="url(#bg3)"/><rect x="0" y="10.300" width="38.400" height="22" fill="url(#bg1)"/><rect x="0" y="32.200" width="38.400" height="22.600" fill="url(#bg2)"/><path d="M0 54.600H38.400V59Q38.400 61.200 36.400 61.200H2Q0 61.200 0 59z" fill="url(#bg3)"/><rect x="0" y="10.300" width="38.400" height="1" fill="rgba(40,60,0,.35)"/></svg>
<svg style="left:1053.5px;top:573px" width="5" height="90" viewBox="0 0 5 90"><path d="M.7 0V90M3.700 0V90" stroke="rgba(0,0,0,.3)" stroke-width="1.200"/><path d="M.7 0V90M3.700 0V90" stroke="#d3e08a" stroke-width="1" stroke-dasharray="1 1.200"/></svg>
</body></html>
